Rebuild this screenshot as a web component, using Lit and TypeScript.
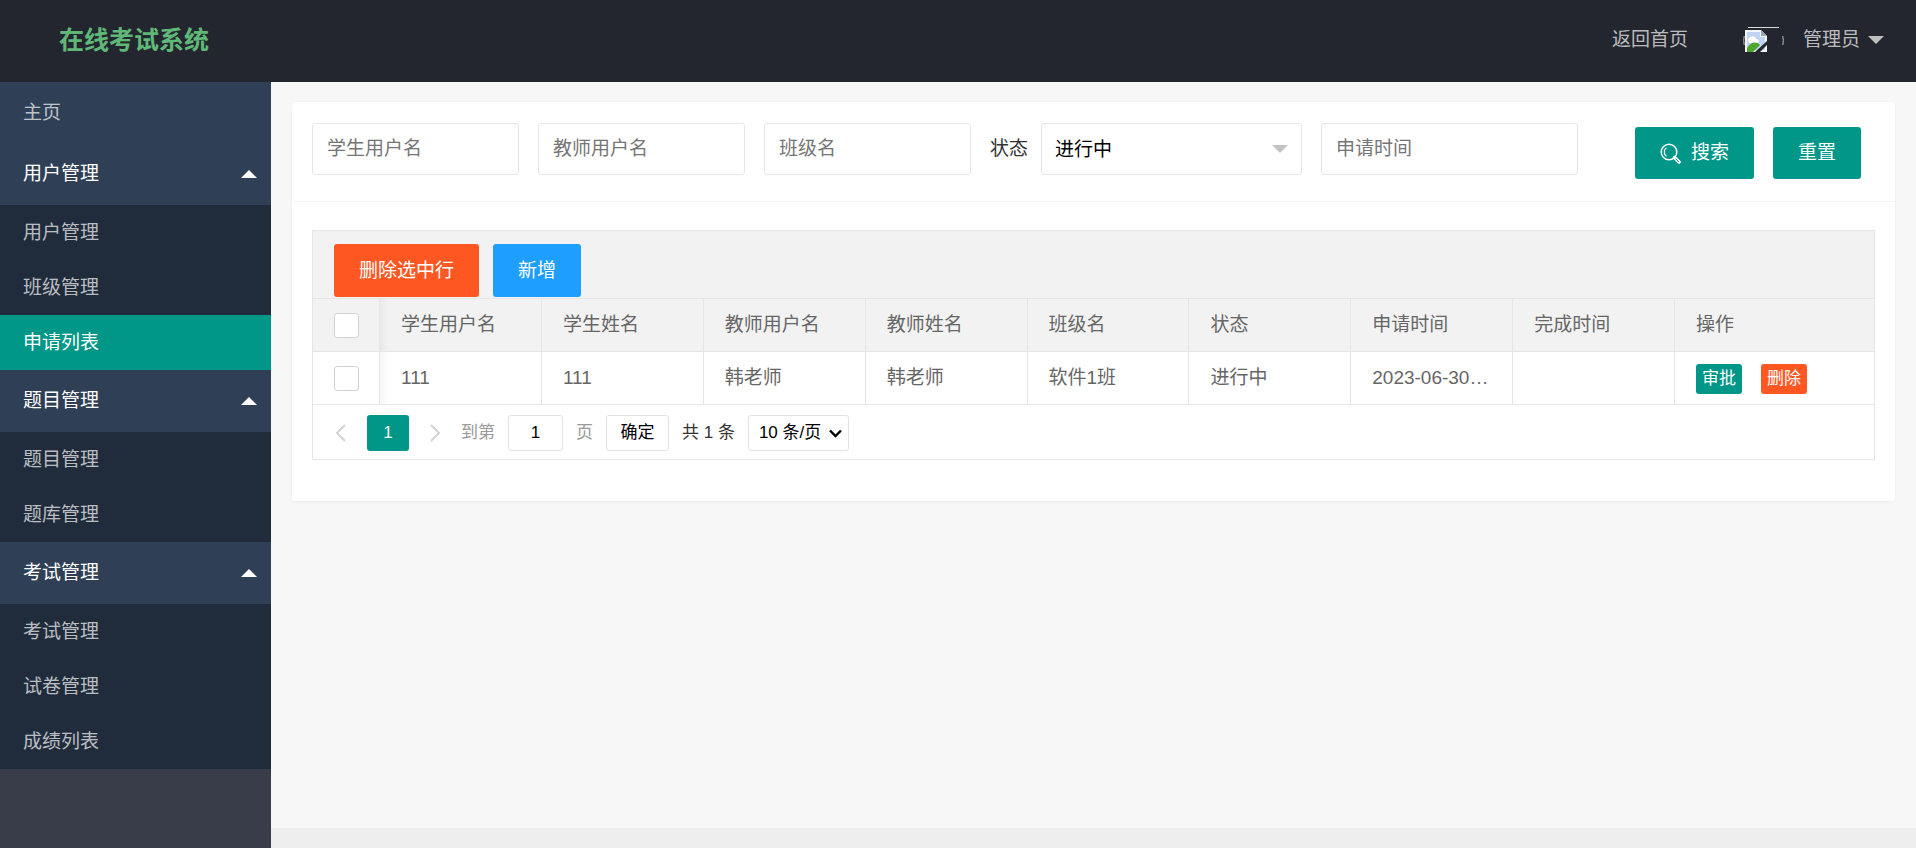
import { LitElement, html, css, svg } from "lit";
import { customElement, state } from "lit/decorators.js";

interface NavGroup {
  title: string;
  items: string[];
}

interface Application {
  id: number;
  studentUser: string;
  studentName: string;
  teacherUser: string;
  teacherName: string;
  className: string;
  status: string;
  applied: string;
  finished: string;
}

const NAV: NavGroup[] = [
  { title: "用户管理", items: ["用户管理", "班级管理", "申请列表"] },
  { title: "题目管理", items: ["题目管理", "题库管理"] },
  { title: "考试管理", items: ["考试管理", "试卷管理", "成绩列表"] },
];

const COLUMNS = ["学生用户名", "学生姓名", "教师用户名", "教师姓名", "班级名", "状态", "申请时间", "完成时间"];

const ROWS: Application[] = [
  {
    id: 1,
    studentUser: "111",
    studentName: "111",
    teacherUser: "韩老师",
    teacherName: "韩老师",
    className: "软件1班",
    status: "进行中",
    applied: "2023-06-30…",
    finished: "",
  },
];

const chevron = (d: string) => html`
  <svg width="12" height="18" viewBox="0 0 12 18" fill="none" stroke="currentColor" stroke-width="2" aria-hidden="true">
    ${svg`<path d=${d}></path>`}
  </svg>
`;

const controls = css`
  *,
  *::before,
  *::after {
    box-sizing: border-box;
  }
  button,
  input,
  select {
    margin: 0;
    font: inherit;
    color: inherit;
    border-radius: 3px;
  }
  button {
    cursor: pointer;
  }
  a {
    color: inherit;
    text-decoration: none;
  }
  .btn {
    display: inline-flex;
    align-items: center;
    justify-content: center;
    gap: 10px;
    height: 52px;
    padding: 0 25px;
    border: 0;
    color: #fff;
    background: #009688;
    white-space: nowrap;
  }
  .btn-danger {
    background: #ff5722;
  }
  .btn-normal {
    background: #1e9fff;
  }
  .btn-small {
    height: 30px;
    padding: 0 6px;
    font-size: 17px;
  }
`;

@customElement("app-header")
export class AppHeader extends LitElement {
  static styles = [
    controls,
    css`
      .header {
        display: flex;
        align-items: center;
        height: 82px;
        padding-bottom: 3px;
        background: #23262e;
        color: rgba(255, 255, 255, 0.7);
      }
      .logo {
        width: 268px;
        margin: 0;
        text-align: center;
        font-size: 25px;
        font-weight: 700;
        color: #5fb878;
      }
      .links {
        display: flex;
        align-items: center;
        margin-left: auto;
        padding-right: 32px;
        gap: 55px;
      }
      .user {
        display: flex;
        align-items: center;
      }
      .avatar {
        margin-right: 19px;
      }
      .caret {
        margin-left: 8px;
        border: 8px solid transparent;
        border-top-color: currentColor;
        border-bottom: 0;
      }
    `,
  ];

  render() {
    return html`
      <header class="header">
        <h1 class="logo">在线考试系统</h1>
        <nav class="links">
          <a href="#home">返回首页</a>
          <a class="user" href="#user">
            <svg class="avatar" width="41" height="26" viewBox="0 0 41 26" aria-hidden="true">
              <path d="M5 .5H36" stroke="#d8d9db" fill="none" />
              <path d="M1.200 9q-1 4.500 0 9M39.800 9q1 4.500 0 9" stroke="#b9bbbe" fill="none" />
              <path d="M2 3h16l6 6v16H2z" fill="#f4f6f8" />
              <path d="M4 5h13v5h5v13H4z" fill="#c0d5f3" />
              <path d="M5 13c0-4 7-5 8-1 3 0 4 3 1 4H6z" fill="#fff" />
              <path d="M4 25v-4c4-6 9-7 13-3l-7 7z" fill="#4ea62b" />
              <path d="M12 25L24 14v4l-7 7z" fill="#23262e" />
              <path d="M18 3l6 6h-6z" fill="#9aa5b1" />
            </svg>
            管理员<span class="caret"></span>
          </a>
        </nav>
      </header>
    `;
  }
}

@customElement("app-sidebar")
export class AppSidebar extends LitElement {
  @state() private active = "申请列表";

  static styles = [
    controls,
    css`
      :host {
        display: block;
        background: #393d49;
      }
      .nav {
        background: #2f4056;
        color: rgba(255, 255, 255, 0.7);
      }
      .item {
        display: flex;
        align-items: center;
        height: 61px;
        padding: 0 14px 0 23px;
      }
      .group {
        display: flex;
        align-items: center;
        justify-content: space-between;
        width: 100%;
        height: 62px;
        padding: 0 14px 0 23px;
        border: 0;
        background: none;
        color: #fff;
      }
      .caret {
        border: 8px solid transparent;
        border-bottom-color: #fff;
        border-top: 0;
      }
      .children {
        margin: 0;
        padding: 0;
        list-style: none;
        background: rgba(0, 0, 0, 0.3);
      }
      .child {
        display: flex;
        align-items: center;
        height: 55px;
        padding-left: 23px;
      }
      .active {
        background: #009688;
        color: #fff;
      }
    `,
  ];

  render() {
    return html`
      <nav class="nav">
        <a class="item" href="#main">主页</a>
        ${NAV.map(
          (group) => html`
            <button class="group" type="button" aria-expanded="true">
              ${group.title}<span class="caret"></span>
            </button>
            <ul class="children">
              ${group.items.map(
                (item) => html`
                  <li>
                    <a
                      class="child ${item === this.active ? "active" : ""}"
                      href="#${item}"
                      @click=${() => (this.active = item)}
                      >${item}</a
                    >
                  </li>
                `
              )}
            </ul>
          `
        )}
      </nav>
    `;
  }
}

@customElement("search-form")
export class SearchForm extends LitElement {
  static styles = [
    controls,
    css`
      :host {
        display: block;
      }
      .form {
        display: flex;
        flex-wrap: wrap;
        align-items: flex-start;
        gap: 19px;
        padding: 21px 34px 22px 20px;
        border-bottom: 1px solid #f6f6f6;
      }
      .field {
        width: 207px;
        height: 52px;
        padding: 0 14px;
        border: 1px solid #e6e6e6;
        background: #fff;
      }
      .field::placeholder {
        color: #757575;
        opacity: 1;
      }
      .date {
        width: 257px;
      }
      .labelled {
        display: flex;
        align-items: center;
        gap: 13px;
        color: #333;
      }
      .select {
        position: relative;
      }
      .select::after {
        content: "";
        position: absolute;
        right: 14px;
        top: 22px;
        border: 8px solid transparent;
        border-top-color: #c2c2c2;
        border-bottom: 0;
        pointer-events: none;
      }
      .picker {
        appearance: none;
        display: block;
        width: 261px;
        padding: 2px 13px 0;
        color: #000;
      }
      .actions {
        display: flex;
        gap: 19px;
        margin-left: auto;
        padding-top: 4px;
      }
    `,
  ];

  render() {
    return html`
      <form class="form" @submit=${(e: Event) => e.preventDefault()}>
        <input class="field" type="text" placeholder="学生用户名" aria-label="学生用户名" />
        <input class="field" type="text" placeholder="教师用户名" aria-label="教师用户名" />
        <input class="field" type="text" placeholder="班级名" aria-label="班级名" />
        <div class="labelled">
          <label for="status">状态</label>
          <div class="select">
            <select class="field picker" id="status">
              <option>进行中</option>
              <option>已完成</option>
            </select>
          </div>
        </div>
        <input class="field date" type="text" placeholder="申请时间" aria-label="申请时间" />
        <div class="actions">
          <button class="btn" type="submit">
            <svg width="21" height="21" viewBox="0 0 21 21" fill="none" stroke="currentColor" aria-hidden="true">
              <circle cx="9" cy="9" r="7.800" stroke-width="1.500" />
              <path d="M6.500 4.800a5 5 0 0 0 0 8.400" stroke-width="1.200" />
              <path d="M14.500 14.500l4.500 4.500" stroke-width="3.600" stroke-linecap="round" />
              <path d="M16 16l2.600 2.600" stroke="#009688" stroke-width="1" stroke-linecap="round" />
            </svg>
            搜索
          </button>
          <button class="btn" type="reset">重置</button>
        </div>
      </form>
    `;
  }
}

@customElement("application-table")
export class ApplicationTable extends LitElement {
  static styles = [
    controls,
    css`
      :host {
        display: block;
        border: 1px solid #e6e6e6;
        color: #666;
      }
      .toolbar {
        display: flex;
        gap: 14px;
        padding: 13px 21px 1px;
        background: #f2f2f2;
        border-bottom: 1px solid #e6e6e6;
      }
      .toolbar .btn {
        height: 53px;
      }
      .table {
        width: 100%;
        table-layout: fixed;
        border-collapse: separate;
        border-spacing: 0;
      }
      .col-check {
        width: 67px;
      }
      .col-ops {
        width: 199px;
      }
      .cell {
        height: 53px;
        padding: 0 20px 0 21px;
        border-right: 1px solid #e6e6e6;
        border-bottom: 1px solid #e6e6e6;
        text-align: left;
        font-weight: inherit;
        overflow: hidden;
        white-space: nowrap;
        text-overflow: ellipsis;
      }
      .cell:last-child {
        border-right: 0;
      }
      .head {
        background: #f2f2f2;
      }
      .shade {
        background-image: linear-gradient(to right, rgba(0, 0, 0, 0.04), transparent 9px);
      }
      .check {
        appearance: none;
        display: block;
        width: 25px;
        height: 25px;
        border: 1px solid #d2d2d2;
        background: #fff;
      }
      .check:checked {
        background: #5fb878;
      }
      .ops {
        display: flex;
        gap: 19px;
        padding-top: 1px;
      }
      .pager {
        display: flex;
        align-items: center;
        height: 54px;
        padding: 2px 22px 0;
        font-size: 17px;
        color: #333;
      }
      .arrow {
        display: flex;
        padding: 0;
        border: 0;
        background: none;
        color: #d2d2d2;
      }
      .current {
        width: 42px;
        height: 36px;
        margin: 0 20px;
        padding: 0;
        border: 0;
        background: #009688;
        color: #fff;
      }
      .jump {
        display: flex;
        align-items: center;
        gap: 13px;
        margin: 0 13px 0 20px;
        color: #999;
      }
      .page {
        width: 55px;
        height: 36px;
        padding: 0;
        border: 1px solid #e2e2e2;
        text-align: center;
        color: #000;
      }
      .confirm {
        width: 63px;
        height: 36px;
        padding: 0;
        border: 1px solid #e2e2e2;
        background: #fff;
        color: #000;
      }
      .limit {
        display: grid;
        align-items: center;
        justify-items: end;
        margin-left: 13px;
        color: #000;
      }
      .limit > * {
        grid-area: 1 / 1;
      }
      .size {
        appearance: none;
        width: 101px;
        height: 36px;
        padding: 0 10px;
        border: 1px solid #e2e2e2;
        background: #fff;
      }
      .limit svg {
        margin-right: 7px;
        pointer-events: none;
      }
    `,
  ];

  private renderRow(row: Application) {
    const values = [
      row.studentUser,
      row.studentName,
      row.teacherUser,
      row.teacherName,
      row.className,
      row.status,
      row.applied,
      row.finished,
    ];
    return html`
      <tr>
        <td class="cell"><input class="check" type="checkbox" aria-label="选择" /></td>
        ${values.map((value, i) => html`<td class="cell ${i === 0 ? "shade" : ""}">${value}</td>`)}
        <td class="cell">
          <div class="ops">
            <button class="btn btn-small" type="button">审批</button>
            <button class="btn btn-small btn-danger" type="button">删除</button>
          </div>
        </td>
      </tr>
    `;
  }

  render() {
    return html`
      <div class="toolbar">
        <button class="btn btn-danger" type="button">删除选中行</button>
        <button class="btn btn-normal" type="button">新增</button>
      </div>
      <table class="table">
        <colgroup>
          <col class="col-check" />
          ${COLUMNS.map(() => html`<col />`)}
          <col class="col-ops" />
        </colgroup>
        <thead>
          <tr>
            <th class="cell head"><input class="check" type="checkbox" aria-label="全选" /></th>
            ${COLUMNS.map((name, i) => html`<th class="cell head ${i === 0 ? "shade" : ""}">${name}</th>`)}
            <th class="cell head">操作</th>
          </tr>
        </thead>
        <tbody>
          ${ROWS.map((row) => this.renderRow(row))}
        </tbody>
      </table>
      <div class="pager">
        <button class="arrow" type="button" aria-label="上一页">${chevron("M10 1L2 9l8 8")}</button>
        <button class="current" type="button">1</button>
        <button class="arrow" type="button" aria-label="下一页">${chevron("M2 1l8 8-8 8")}</button>
        <div class="jump">
          <label for="page">到第</label>
          <input class="page" id="page" type="text" value="1" />
          <span>页</span>
          <button class="confirm" type="button">确定</button>
        </div>
        <span>共 1 条</span>
        <div class="limit">
          <select class="size" aria-label="每页条数">
            <option>10 条/页</option>
            <option>20 条/页</option>
          </select>
          <svg width="13" height="9" viewBox="0 0 13 9" fill="none" stroke="currentColor" stroke-width="2.400" aria-hidden="true">
            <path d="M1 1.500l5.500 5.500L12 1.500" />
          </svg>
        </div>
      </div>
    `;
  }
}

@customElement("app-root")
export class AppRoot extends LitElement {
  static styles = css`
    :host {
      display: grid;
      grid-template: auto 1fr / 271px minmax(0, 1fr);
      min-height: 100vh;
      font: 19px/26px "Liberation Sans", "Noto Sans CJK SC", sans-serif;
      background: #f7f7f7;
    }
    app-header {
      grid-column: 1 / -1;
    }
    .main {
      display: flex;
      flex-direction: column;
      justify-content: space-between;
    }
    .card {
      margin: 20px 21px;
      padding-bottom: 41px;
      border-radius: 3px;
      background: #fff;
      box-shadow: 0 1px 3px rgba(0, 0, 0, 0.06);
    }
    .list {
      margin: 28px 20px 0;
    }
    .footer {
      height: 20px;
      background: #eee;
    }
  `;

  render() {
    return html`
      <app-header></app-header>
      <app-sidebar></app-sidebar>
      <main class="main">
        <section class="card">
          <search-form></search-form>
          <application-table class="list"></application-table>
        </section>
        <footer class="footer"></footer>
      </main>
    `;
  }
}
